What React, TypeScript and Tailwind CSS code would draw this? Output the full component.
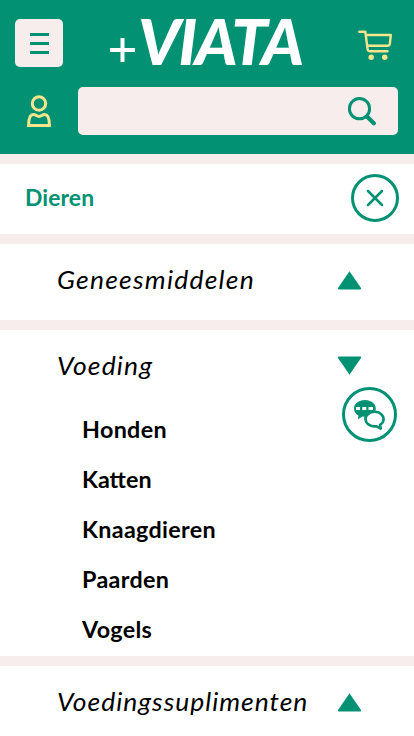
function CartIcon() {
  return (
    <svg className="h-[32px] w-[36px]" viewBox="357 29 36 32" fill="none" stroke="#f5e68d" strokeWidth="2.4" strokeLinecap="round" strokeLinejoin="round">
      <path d="M359.3 31.7h6l2.3 17.4q.4 2.2 2.6 2.2h17.3M366.1 35h24.7l-.9 8.4q-.3 2.3-2.4 2.3h-20.2" />
      <circle cx="371.2" cy="57.2" r="2.7" fill="#f5e68d" stroke="none" />
      <circle cx="384.7" cy="57.2" r="2.7" fill="#f5e68d" stroke="none" />
    </svg>
  );
}

function UserIcon() {
  return (
    <svg className="h-[34px] w-[26px]" viewBox="26 94 26 34" fill="none" stroke="#f5e68d" strokeWidth="3">
      <circle cx="39" cy="103.5" r="6.7" />
      <path d="M28.6 125.4c0-5.6.5-10.8 4.9-10.8 2.4 0 3.200 1.900 5.500 1.900s3.100-1.900 5.500-1.900c4.400 0 4.900 5.200 4.900 10.800z" />
    </svg>
  );
}

function SearchIcon() {
  return (
    <svg className="h-[30px] w-[30px]" viewBox="347 96 30 30" fill="none" stroke="#029172" strokeLinecap="round">
      <circle cx="359.500" cy="108.700" r="10.100" strokeWidth="3" />
      <path d="M367.500 117.100l6.300 6.200" strokeWidth="4.200" />
    </svg>
  );
}

function ChatIcon() {
  return (
    <svg className="h-[32px] w-[34px] shrink-0" viewBox="353 399 34 32">
      <path fill="#029172" d="M365 400c6.200 0 10.800 3.700 10.800 8.400s-4.600 8.400-10.800 8.400l-2.400-.2-4.600 2.600.3-3.700c-2.700-1.600-4.300-4.200-4.300-7.100 0-4.700 4.800-8.400 11-8.400z" />
      <path fill="#fff" d="M356 407h4v3h-4zm6.300 0h4v3h-4zm6.200 0h4.500v3h-4.500z" />
      <path fill="#fff" stroke="#029172" strokeWidth="2.600" strokeLinejoin="round" d="M374.700 411.800c5 0 8.900 3.200 8.900 7.300 0 2.600-1.400 4.500-3.600 5.800l.8 3.700-4.200-2.300c-6.300.7-11.100-2.800-11.100-7.400 0-4 4.100-7.100 9.200-7.100z" />
    </svg>
  );
}

function Arrow({ down = false }: { down?: boolean }) {
  return (
    <svg className={down ? "h-5 w-6 -scale-y-100" : "h-5 w-6"} viewBox="0 0 24 20">
      <path d="M11.500 1.200L23 18q.3 1.500-.8 1.500H.8Q-.3 19.500 0 18z" fill="#029172" />
    </svg>
  );
}

const headingStyle = "origin-left scale-x-[1.06] text-[25px] leading-[32px] italic whitespace-nowrap";

export default function App() {
  return (
    <div className="relative flex h-[736px] w-[414px] flex-col gap-[10px] overflow-hidden bg-[#f7eded] font-['Lato',sans-serif] text-black">
      <header className="h-[154px] shrink-0 bg-[#029172]">
        <div className="flex h-[87px] items-start pl-[15px] pr-[21px] pt-[19px]">
          <button className="flex size-12 flex-col items-center justify-center gap-[6px] rounded-[5px] bg-[#f7eded]">
            <span className="h-[3px] w-[19px] bg-[#029172]" />
            <span className="h-[3px] w-[19px] bg-[#029172]" />
            <span className="h-[3px] w-[19px] bg-[#029172]" />
          </button>
          <div className="ml-[46px] flex h-12 w-[194px] items-start text-white">
            <svg className="mt-[18px] h-[26px] w-[26px] shrink-0" viewBox="0 0 26 26" stroke="#fff" strokeWidth="4">
              <path d="M1 13h25M13.500 1v24" />
            </svg>
            <span className="-mt-[2px] ml-[3px] origin-left scale-x-[1.045] text-[62px] leading-[48px] font-black tracking-[-2px] italic">VIATA</span>
          </div>
          <button className="mt-[10px] ml-auto"><CartIcon /></button>
        </div>
        <div className="flex h-12 items-center pl-[26px]">
          <UserIcon />
          <div className="ml-[26px] flex h-12 w-[320px] items-center justify-end rounded-[5px] bg-[#f7eded] pr-[21px]">
            <SearchIcon />
          </div>
        </div>
      </header>
      <section className="flex h-[70px] shrink-0 items-start justify-between bg-white pt-[10px] pr-[15px] pl-[25px]">
        <h1 className="mt-[9px] origin-left scale-x-[1.04] text-[22px] leading-[30px] font-bold tracking-[0.1px] text-[#029172]">Dieren</h1>
        <button className="flex size-12 items-center justify-center rounded-full border-3 border-[#029172]">
          <svg className="size-[18px]" viewBox="0 0 18 18" stroke="#029172" strokeWidth="2.500" strokeLinecap="round">
            <path d="M2 2l14 14M16 2L2 16" />
          </svg>
        </button>
      </section>
      <section className="flex h-[76px] shrink-0 items-start justify-between bg-white pt-[19px] pr-[52px] pl-[57px]">
        <h2 className={`${headingStyle} tracking-[1.15px]`}>Geneesmiddelen</h2>
        <span className="mt-[7px]"><Arrow /></span>
      </section>
      <section className="h-[326px] shrink-0 bg-white pt-[19px] pr-[52px] pl-[57px]">
        <div className="flex h-8 items-start justify-between">
          <h2 className={`${headingStyle} tracking-[1.05px]`}>Voeding</h2>
          <span className="mt-[7px]"><Arrow down /></span>
        </div>
        <ul className="mt-[24px] ml-[25px] origin-left scale-x-[1.06] text-[22px] leading-[50px] font-bold tracking-[0.3px]">
          <li>Honden</li>
          <li className="tracking-[0px]">Katten</li>
          <li>Knaagdieren</li>
          <li>Paarden</li>
          <li>Vogels</li>
        </ul>
      </section>
      <section className="flex h-[70px] shrink-0 items-start justify-between bg-white pt-[19px] pr-[52px] pl-[57px]">
        <h2 className={`${headingStyle} tracking-[0.92px]`}>Voedingssuplimenten</h2>
        <span className="mt-[7px]"><Arrow /></span>
      </section>
      <button className="absolute top-[387px] left-[342px] flex size-[55px] items-center justify-center rounded-full border-3 border-[#029172] bg-white">
        <ChatIcon />
      </button>
    </div>
  );
}
